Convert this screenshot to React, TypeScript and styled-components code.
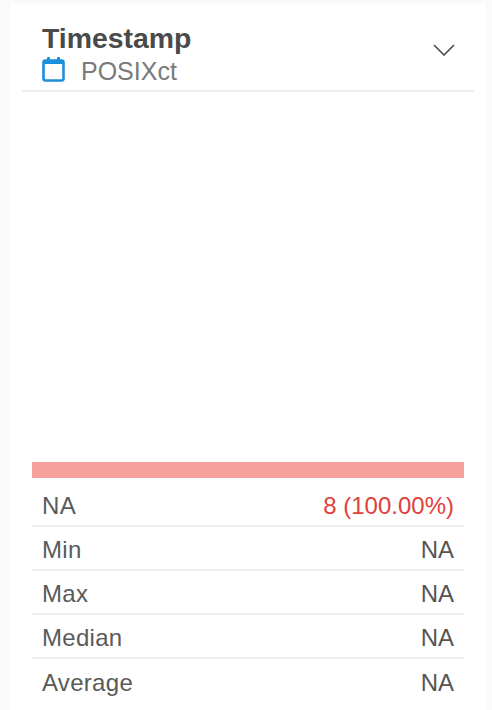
import React from "react"
import styled, { createGlobalStyle } from "styled-components"

const GlobalStyle = createGlobalStyle`
  html, body {
    margin: 0;
    padding: 0;
    background: #fafafa;
    font-family: "Liberation Sans", Arial, sans-serif;
  }
`
const Card = styled.div`
  box-sizing: border-box;
  width: 476px;
  height: 706px;
  margin: 4px 0 0 10px;
  padding: 0 12px;
  background: #fff;
  overflow: hidden;
`
const Header = styled.div`
  box-sizing: border-box;
  height: 88px;
  padding: 19px 19px 0 20px;
  border-bottom: 2px solid #eeeeee;
  display: flex;
  justify-content: space-between;
`
const Title = styled.div`
  font-size: 28.4px;
  line-height: 31px;
  font-weight: 700;
  color: #4a4a4a;
`
const TypeRow = styled.div`
  display: flex;
  align-items: center;
  gap: 15px;
  height: 31px;
  font-size: 25px;
  color: #7a7a7a;
`
const TypeName = styled.span`
  padding-top: 4px;
`
const Chevron = styled.svg`
  margin: 21px 0 0 0;
  width: 22px;
  height: 12px;
  fill: none;
  stroke: #4a4a4a;
  stroke-width: 1.6;
`
const Plot = styled.div`
  height: 370px;
`
const Summary = styled.div`
  margin: 0 10px;
`
const NaBar = styled.div`
  height: 16px;
  margin-bottom: 5px;
  background: #f6a19c;
`
const Row = styled.div`
  box-sizing: border-box;
  height: 44px;
  padding: 3px 10px 0;
  display: flex;
  align-items: center;
  justify-content: space-between;
  font-size: 24px;
  border-bottom: 2px solid #eeeeee;
  &:last-child {
    border-bottom: none;
  }
`
const Label = styled.span`
  color: #5a5a5a;
  letter-spacing: 0.3px;
`
const Value = styled.span<{ $alert?: boolean }>`
  color: ${(p) => (p.$alert ? "#e0403c" : "#555555")};
`

const rows = [
  { label: "NA", value: "8 (100.00%)", alert: true },
  { label: "Min", value: "NA" },
  { label: "Max", value: "NA" },
  { label: "Median", value: "NA" },
  { label: "Average", value: "NA" },
]

export default function App(): JSX.Element {
  return (
    <>
      <GlobalStyle />
      <Card>
        <Header>
          <div>
            <Title>Timestamp</Title>
            <TypeRow>
              <svg width="24" height="27" viewBox="0 0 24 27" fill="none">
                <rect x="1.5" y="4.5" width="20" height="20" rx="2" stroke="#1c8fdc" strokeWidth="2.6" />
                <rect x="1.5" y="4.5" width="20" height="3.5" fill="#1c8fdc" />
                <rect x="5" y="1" width="3" height="5" rx="1" fill="#1c8fdc" />
                <rect x="15" y="1" width="3" height="5" rx="1" fill="#1c8fdc" />
              </svg>
              <TypeName>POSIXct</TypeName>
            </TypeRow>
          </div>
          <Chevron viewBox="0 0 22 12">
            <path d="M1 1 L11 11 L21 1" />
          </Chevron>
        </Header>
        <Plot />
        <Summary>
          <NaBar />
          {rows.map((r) => (
            <Row key={r.label}>
              <Label>{r.label}</Label>
              <Value $alert={r.alert}>{r.value}</Value>
            </Row>
          ))}
        </Summary>
      </Card>
    </>
  )
}
